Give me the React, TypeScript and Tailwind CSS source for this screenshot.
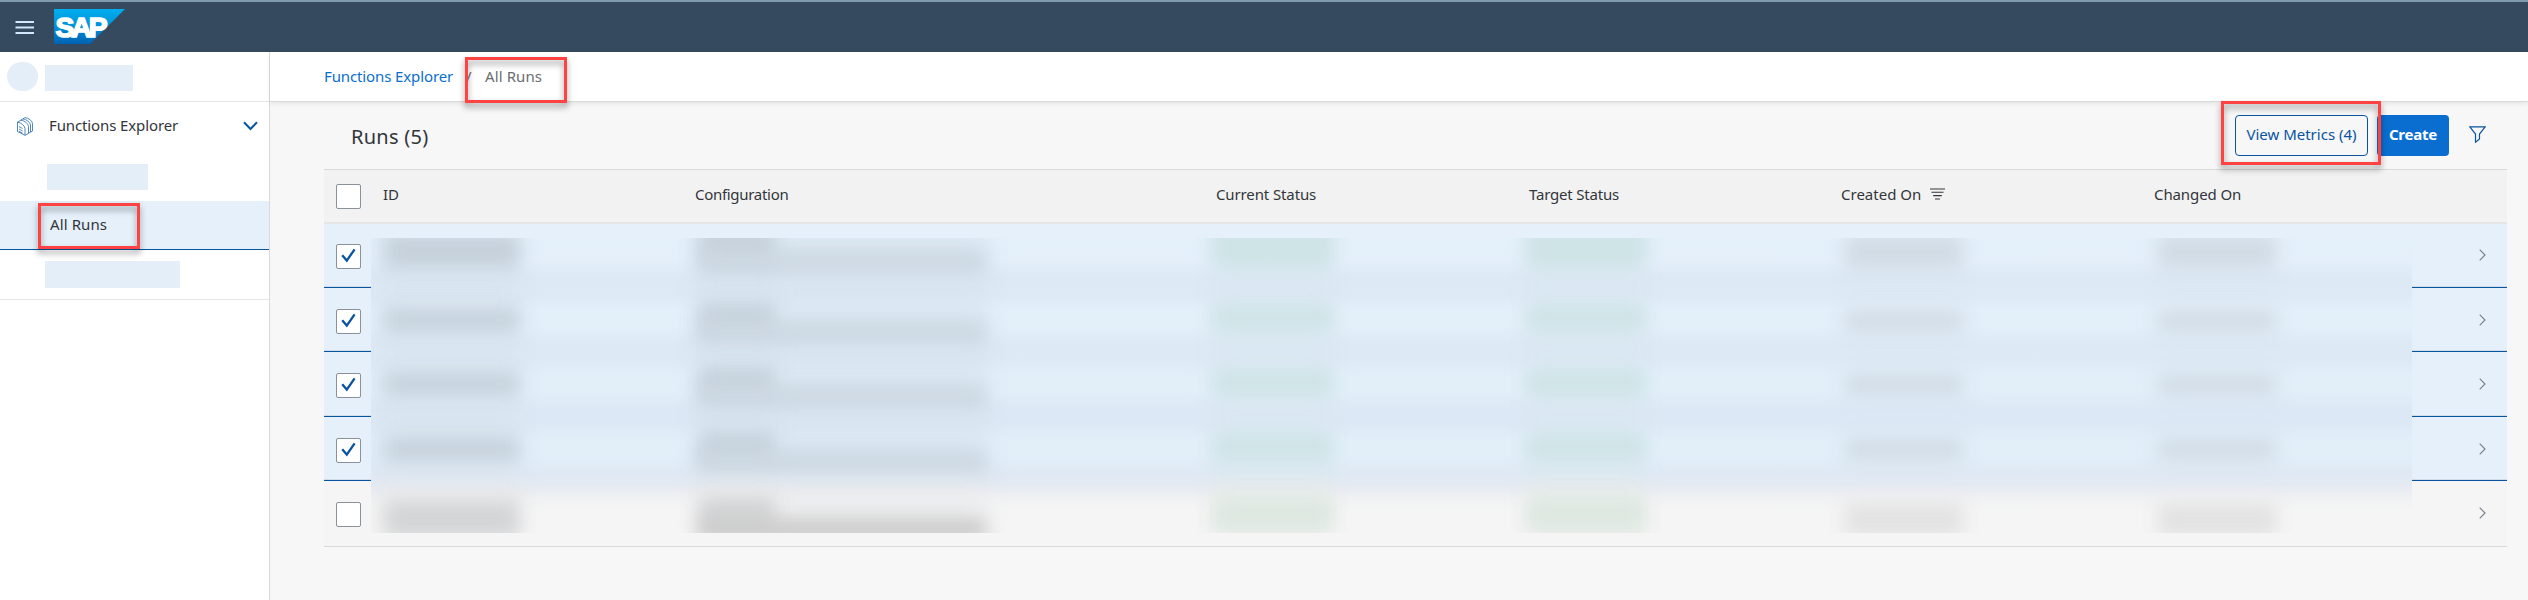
import React from "react";

const columns = [
  { label: "ID", width: "w-[312px]", tracking: "tracking-normal" },
  { label: "Configuration", width: "w-[521px]", tracking: "tracking-[-0.3px]" },
  { label: "Current Status", width: "w-[313px]", tracking: "tracking-[-0.12px]" },
  { label: "Target Status", width: "w-[312px]", tracking: "tracking-[-0.2px]" },
  { label: "Created On", width: "w-[313px]", tracking: "tracking-normal", sorted: true },
  { label: "Changed On", width: "w-[312px]", tracking: "tracking-[-0.1px]" },
];

const rows = [
  { checked: true, height: "h-16", box: "pt-[20px]", arrow: "mt-[25px]", id: "mt-[10px] h-[34px]", name: "mt-[4px] h-[34px]", status: "mt-[6px] h-[36px]", date: "mt-[10px] h-[36px]" },
  { checked: true, height: "h-16", box: "pt-[21px]", arrow: "mt-[26px]", id: "mt-[21px] h-[22px]", name: "mt-[17px] h-[28px]", status: "mt-[19px] h-[22px]", date: "mt-[22px] h-[22px]" },
  { checked: true, height: "h-[65px]", box: "pt-[21px]", arrow: "mt-[26px]", id: "mt-[21px] h-[22px]", name: "mt-[17px] h-[28px]", status: "mt-[20px] h-[22px]", date: "mt-[22px] h-[22px]" },
  { checked: true, height: "h-16", box: "pt-[21px]", arrow: "mt-[26px]", id: "mt-[21px] h-[22px]", name: "mt-[17px] h-[28px]", status: "mt-[19px] h-[22px]", date: "mt-[21px] h-[22px]" },
  { checked: false, height: "h-[66px]", box: "pt-[21px]", arrow: "mt-[26px]", id: "mt-[20px] h-[36px]", name: "mt-[17px] h-[32px]", status: "mt-[19px] h-[28px]", date: "mt-[22px] h-[34px]" },
];

function Checkbox({ checked = false }: { checked?: boolean }) {
  return (
    <span className="flex h-[25px] w-[25px] shrink-0 items-center justify-center rounded-[2px] border border-[#89919a] bg-white">
      {checked && (
        <svg className="-mt-[2px]" width="15" height="15" viewBox="0 0 15 15" fill="none" stroke="#0854a0" strokeWidth="2.3">
          <path d="M1.2 7.2 5.8 12.6 13.6 1.3" />
        </svg>
      )}
    </span>
  );
}

function Highlight({ className }: { className: string }) {
  return (
    <div
      className={`pointer-events-none absolute z-20 border-[3px] border-[#ff4343] drop-shadow-[0_4px_3px_rgba(0,0,0,0.42)] ${className}`}
    />
  );
}

function Shell() {
  return (
    <header className="flex h-[52px] items-start border-t-2 border-[#7f9cac] bg-[#354a5f] pl-[15px]">
      <svg className="mt-[18px]" width="20" height="15" viewBox="0 0 20 15" stroke="#d1e8ff" strokeWidth="1.8">
        <path d="M0.5 2H19M0.5 7.5H19M0.5 13H19" />
      </svg>
      <svg className="mt-[7px] ml-[19px]" width="71" height="35" viewBox="0 0 71 35">
        <defs>
          <linearGradient id="logo" x1="0" y1="0" x2="0" y2="1">
            <stop offset="0" stopColor="#00aeef" />
            <stop offset="0.45" stopColor="#0094db" />
            <stop offset="1" stopColor="#0062b3" />
          </linearGradient>
        </defs>
        <path d="M0 0H71L36 35H0Z" fill="url(#logo)" />
        <text
          x="1.5"
          y="27.6"
          fill="#fff"
          stroke="#fff"
          strokeWidth="1.6"
          fontFamily="'Liberation Sans', sans-serif"
          fontWeight="700"
          fontSize="28"
          textLength="49"
          lengthAdjust="spacingAndGlyphs"
          letterSpacing="-3"
        >
          SAP
        </text>
      </svg>
    </header>
  );
}

function Sidebar() {
  return (
    <aside className="flex w-[270px] shrink-0 flex-col border-r border-[#d9d9d9] bg-white">
      <div className="flex h-[50px] items-start border-b border-[#e5e5e5] pl-[7px]">
        <div className="mt-[10px] h-[29px] w-[31px] rounded-full bg-[#e4eef9]" />
        <div className="mt-[13px] ml-[7px] h-[26px] w-[88px] bg-[#e4eef9]" />
      </div>
      <div className="flex h-[48px] items-center pl-[17px]">
        <svg width="16" height="19" viewBox="0 0 16 19" fill="none" stroke="#0854a0" strokeWidth="0.7">
          <path d="M0.5 5.2 8 0.6C11.5 1 15 3.500 15.500 6.500V14L8 18.400 0.500 14.500ZM8 18V11.500C7.500 8.500 4 5.500 0.500 5.200M4 3.200C8 3.700 11 6.800 11.500 9.500V16M6 2C10 2.500 13 5.500 13.500 8V15M2 9.500 5.500 11.500M2 12 5.500 14M2 14.300 5.500 16.200" />
        </svg>
        <span className="ml-[16px] w-[180px] pb-[2px] text-[15px] tracking-[-0.12px]">Functions Explorer</span>
        <svg className="ml-[14px]" width="15" height="10" viewBox="0 0 15 10" fill="none" stroke="#0854a0" strokeWidth="2">
          <path d="M1 1.200 7.500 8 14 1.200" />
        </svg>
      </div>
      <div className="flex h-[51px] items-start pt-[14px] pl-[47px]">
        <div className="h-[26px] w-[101px] bg-[#e4eef9]" />
      </div>
      <div className="relative flex h-[49px] items-center border-b border-[#0854a0] bg-[#e5f0fa] pb-px pl-[50px] text-[15px] tracking-[0.1px]">
        All Runs
        <Highlight className="top-[2px] left-[38px] h-[46px] w-[102px]" />
      </div>
      <div className="flex h-[50px] items-start border-b border-[#e5e5e5] pt-[11px] pl-[45px]">
        <div className="h-[27px] w-[135px] bg-[#e4eef9]" />
      </div>
    </aside>
  );
}

function Breadcrumb() {
  return (
    <nav className="relative z-10 flex h-[50px] shrink-0 items-center border-b border-[#d9d9d9] bg-white pl-[54px] text-[15px] shadow-[0_2px_4px_rgba(0,0,0,0.07)]">
      <span className="w-[142px] tracking-[-0.12px] text-[#0a6ed1]">Functions Explorer</span>
      <span className="w-[19px] text-[#6a6d70]">/</span>
      <span className="tracking-[0.1px] text-[#6a6d70]">All Runs</span>
      <Highlight className="top-[5px] left-[195px] h-[46px] w-[102px]" />
    </nav>
  );
}

function Toolbar() {
  return (
    <div className="relative flex h-[67px] shrink-0 items-start pr-[42px] pl-[81px]">
      <h1 className="mt-[21px] text-[20px] leading-[28px] tracking-[0.25px]">Runs (5)</h1>
      <div className="mt-[13px] ml-auto flex items-center">
        <button className="h-[41px] w-[133px] rounded-[4px] border border-[#0854a0] pb-[2px] text-[15px] whitespace-nowrap text-[#0854a0]">
          View Metrics (4)
        </button>
        <button className="ml-[9px] h-[41px] w-[72px] rounded-[4px] bg-[#0a6ed1] pb-[2px] text-[15px] font-bold tracking-[-0.2px] text-white">
          Create
        </button>
        <svg className="-mt-[2px] ml-[20px]" width="17" height="17" viewBox="0 0 17 17" fill="none" stroke="#0854a0" strokeWidth="1.2">
          <path d="M0.800 0.900H16.200L10.500 8V13L6.500 16.200V8Z" />
        </svg>
      </div>
      <Highlight className="top-[-1px] right-[147px] h-[64px] w-[160px]" />
    </div>
  );
}

function Redacted() {
  return (
    <div className="absolute top-[68px] left-[47px] h-[295px] w-[2041px] overflow-hidden bg-[linear-gradient(180deg,#e4f0fa_0px,#e4effa_22px,#dde9f5_40px,#dde9f5_56px,#e3eff9_72px,#e3eff9_88px,#dde9f5_106px,#dde9f5_120px,#e2eff9_138px,#e2eff9_154px,#dce8f5_172px,#dce8f5_184px,#e2eff9_202px,#e2eff9_216px,#dfe9f4_235px,#e5eaf2_247px,#f1f2f3_262px,#f5f5f5_274px)]">
      <div className="-mt-[14px]">
        {rows.map((row, i) => {
          const dark = row.checked ? "bg-[#c5d0da]" : "bg-[#d3d4d5]";
          const mid = row.checked ? "bg-[#ccd7e1]" : "bg-[#cbcbcb]";
          const light = row.checked ? "bg-[#d1dbe5]" : "bg-[#e2e2e2]";
          const green = row.checked ? "bg-[#cde3e5]" : "bg-[#dce7df]";
          const haze = row.checked ? "bg-[#d6e3ee]" : "bg-[#e9eaec]";
          const hazeGreen = row.checked ? "bg-[#d9e8f1]" : "bg-[#e6ece9]";
          return (
            <div key={i} className={`flex ${row.height}`}>
              <div className="relative w-[329px] pl-[14px]">
                <div className={`absolute inset-y-0 left-[6px] w-[142px] opacity-50 blur-[10px] ${haze}`} />
                <div className={`relative w-[134px] blur-[9px] ${row.id} ${dark}`} />
              </div>
              <div className="relative w-[513px]">
                <div className={`absolute inset-y-0 left-[-4px] w-[82px] opacity-80 blur-[10px] ${haze}`} />
                <div className={`absolute inset-y-0 left-[76px] w-[212px] opacity-50 blur-[10px] ${haze}`} />
                <div className={`relative w-[74px] blur-[9px] ${row.name} ${dark}`} />
                <div className={`relative mt-[-12px] h-[23px] w-[286px] blur-[9px] ${mid}`} />
              </div>
              <div className="relative w-[314px]">
                <div className={`absolute inset-y-0 left-0 w-[118px] opacity-70 blur-[10px] ${hazeGreen}`} />
                <div className={`relative w-[120px] blur-[9px] ${row.status} ${green}`} />
              </div>
              <div className="relative w-[318px]">
                <div className={`absolute inset-y-0 left-0 w-[118px] opacity-70 blur-[10px] ${hazeGreen}`} />
                <div className={`relative w-[118px] blur-[9px] ${row.status} ${green}`} />
              </div>
              <div className="w-[313px]">
                <div className={`w-[118px] blur-[9px] ${row.date} ${light}`} />
              </div>
              <div className="w-[254px]">
                <div className={`w-[118px] blur-[9px] ${row.date} ${light}`} />
              </div>
            </div>
          );
        })}
      </div>
    </div>
  );
}

function RunsTable() {
  return (
    <section className="relative mr-[21px] ml-[54px] border-t border-[#d9d9d9]">
      <div className="flex h-[54px] items-start border-b-2 border-[#e5e5e5] bg-[#f2f2f2] pl-[12px] text-[15px]">
        <div className="w-[47px] pt-[14px]">
          <Checkbox />
        </div>
        {columns.map((c) => (
          <div key={c.label} className={`flex items-center pt-[12px] leading-6 ${c.width} ${c.tracking}`}>
            {c.label}
            {c.sorted && (
              <svg className="ml-[9px]" width="15" height="12" viewBox="0 0 15 12" stroke="#32363a" strokeWidth="1.100">
                <path d="M0 1H15M1.500 4.300H13.500M3.200 7.600H11.800M5 11H10" />
              </svg>
            )}
          </div>
        ))}
      </div>
      {rows.map((row, i) => (
        <div
          key={i}
          className={`flex items-start justify-between border-b pr-[21px] pl-[12px] ${row.height} ${
            row.checked ? "border-[#0854a0] bg-[#e5f0fa] shadow-[inset_0_-1px_0_#cfdbe6]" : "border-[#d9d9d9] bg-[#f5f5f5]"
          }`}
        >
          <div className={row.box}>
            <Checkbox checked={row.checked} />
          </div>
          <svg className={row.arrow} width="7" height="12" viewBox="0 0 7 12" fill="none" stroke="#7b848d" strokeWidth="1.200">
            <path d="M0.700 0.700 6 6 0.700 11.300" />
          </svg>
        </div>
      ))}
      <Redacted />
    </section>
  );
}

export default function App() {
  return (
    <div className="flex h-[600px] w-[2528px] flex-col overflow-hidden bg-[#f7f7f7] font-['Noto_Sans',sans-serif] text-[#32363a]">
      <Shell />
      <div className="flex flex-1">
        <Sidebar />
        <main className="flex flex-1 flex-col">
          <Breadcrumb />
          <Toolbar />
          <RunsTable />
        </main>
      </div>
    </div>
  );
}
